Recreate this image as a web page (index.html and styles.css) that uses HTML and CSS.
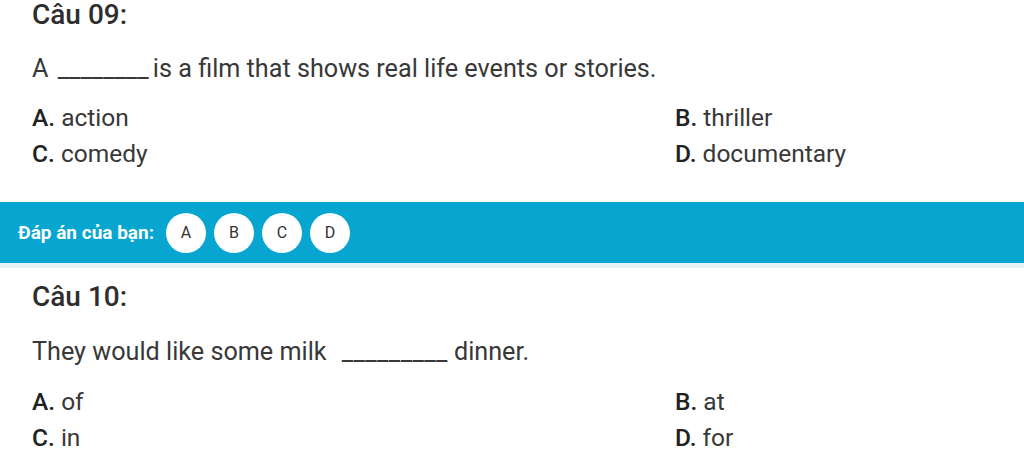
FILE: index.html
```html
<!DOCTYPE html>
<html lang="vi">
<head>
<meta charset="utf-8">
<link rel="stylesheet" href="styles.css">
</head>
<body>
<section class="question q1">
  <h2 class="title">Câu 09:</h2>
  <p class="stem">A <span class="blank">________</span> is a film that shows real life events or stories.</p>
  <div class="options">
    <div class="opt"><b>A.</b> action</div>
    <div class="opt"><b>B.</b> thriller</div>
    <div class="opt"><b>C.</b> comedy</div>
    <div class="opt"><b>D.</b> documentary</div>
  </div>
</section>
<div class="answer-bar">
  <span class="label">Đáp án của bạn:</span>
  <div class="choices">
    <span class="choice">A</span>
    <span class="choice">B</span>
    <span class="choice">C</span>
    <span class="choice">D</span>
  </div>
</div>
<div class="bar-shadow"></div>
<section class="question q2">
  <h2 class="title">Câu 10:</h2>
  <p class="stem">They would like some milk <span class="blank wide">_________</span> dinner.</p>
  <div class="options">
    <div class="opt"><b>A.</b> of</div>
    <div class="opt"><b>B.</b> at</div>
    <div class="opt"><b>C.</b> in</div>
    <div class="opt"><b>D.</b> for</div>
  </div>
</section>
</body>
</html>
```
FILE: styles.css
```css
html, body {
  margin: 0;
  padding: 0;
  background: #fff;
  font-family: Roboto, "Noto Sans", sans-serif;
  color: #383838;
  overflow: hidden;
}
.question {
  padding: 0 32px;
}
.title {
  margin: 0;
  font-size: 28px;
  font-weight: 500;
  line-height: 30px;
  color: #2e2e2e;
}
.stem {
  margin: 24px 0 0;
  font-size: 25.2px;
  line-height: 30px;
}
.blank {
  margin-left: 3px;
  margin-right: -2px;
}
.blank.wide {
  margin-left: 9px;
  letter-spacing: 0.4px;
  margin-right: 0;
}
.options {
  display: grid;
  grid-template-columns: 643px 1fr;
  margin-top: 16px;
}
.opt {
  font-size: 24.5px;
  line-height: 36px;
}
.opt b {
  font-weight: 500;
  color: #222;
}
.answer-bar {
  margin-top: 30px;
  height: 61px;
  background: #06a6d0;
  display: flex;
  align-items: center;
  padding-left: 18px;
}
.label {
  color: #fff;
  font-weight: 700;
  font-size: 19px;
  margin-right: 12px;
}
.choices {
  display: flex;
  gap: 8px;
}
.choice {
  width: 40px;
  height: 40px;
  border-radius: 50%;
  background: #fff;
  color: #333;
  font-size: 16px;
  display: flex;
  align-items: center;
  justify-content: center;
}
.bar-shadow {
  height: 5px;
  background: #e6f2f6;
}
.q2 .title {
  margin-top: 14px;
}
.q2 .stem {
  margin-top: 25px;
}
.q2 .options {
  margin-top: 17px;
}
```
